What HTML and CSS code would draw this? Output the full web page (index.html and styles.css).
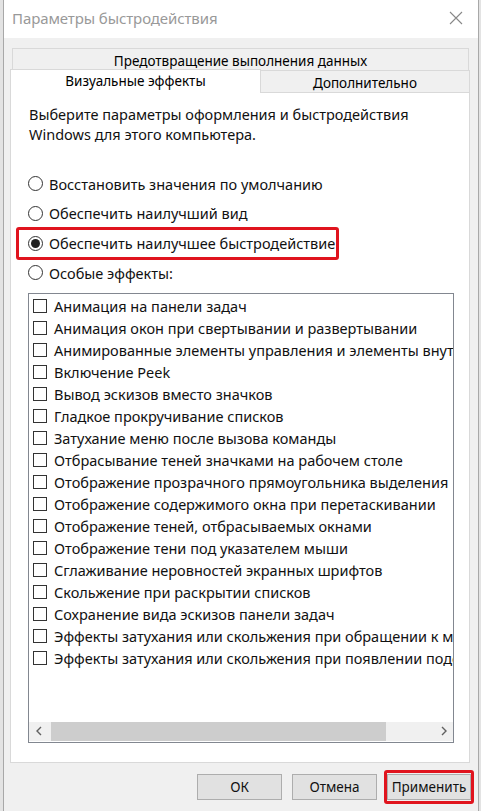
FILE: index.html
```html
<!DOCTYPE html>
<html lang="ru">
<head>
<meta charset="utf-8">
<title>Параметры быстродействия</title>
<link rel="stylesheet" href="styles.css">
</head>
<body>
<div class="screen">
  <div class="window">
    <div class="titlebar">
      <span class="title">Параметры быстродействия</span>
      <svg class="close" width="14" height="14" viewBox="0 0 14 14"><path d="M1 1L13 13M13 1L1 13" stroke="#888" stroke-width="1.1" fill="none"/></svg>
    </div>
    <div class="body">
      <div class="tabrow back">
        <div class="tab full">Предотвращение выполнения данных</div>
      </div>
      <div class="tabrow front">
        <div class="tab selected">Визуальные эффекты</div>
        <div class="tab other">Дополнительно</div>
      </div>
      <div class="panel">
        <p class="intro">Выберите параметры оформления и быстродействия Windows для этого компьютера.</p>
        <div class="radios">
          <div class="radio"><span class="dot"></span>Восстановить значения по умолчанию</div>
          <div class="radio"><span class="dot"></span>Обеспечить наилучший вид</div>
          <div class="radio checked"><span class="dot"></span>Обеспечить наилучшее быстродействие</div>
          <div class="radio"><span class="dot"></span>Особые эффекты:</div>
        </div>
        <div class="listbox">
          <div class="items">
            <div class="item"><span class="box"></span>Анимация на панели задач</div>
            <div class="item"><span class="box"></span>Анимация окон при свертывании и развертывании</div>
            <div class="item"><span class="box"></span>Анимированные элементы управления и элементы внутри окна</div>
            <div class="item"><span class="box"></span>Включение Peek</div>
            <div class="item"><span class="box"></span>Вывод эскизов вместо значков</div>
            <div class="item"><span class="box"></span>Гладкое прокручивание списков</div>
            <div class="item"><span class="box"></span>Затухание меню после вызова команды</div>
            <div class="item"><span class="box"></span>Отбрасывание теней значками на рабочем столе</div>
            <div class="item"><span class="box"></span>Отображение прозрачного прямоугольника выделения</div>
            <div class="item"><span class="box"></span>Отображение содержимого окна при перетаскивании</div>
            <div class="item"><span class="box"></span>Отображение теней, отбрасываемых окнами</div>
            <div class="item"><span class="box"></span>Отображение тени под указателем мыши</div>
            <div class="item"><span class="box"></span>Сглаживание неровностей экранных шрифтов</div>
            <div class="item"><span class="box"></span>Скольжение при раскрытии списков</div>
            <div class="item"><span class="box"></span>Сохранение вида эскизов панели задач</div>
            <div class="item"><span class="box"></span>Эффекты затухания или скольжения при обращении к меню</div>
            <div class="item"><span class="box"></span>Эффекты затухания или скольжения при появлении подсказок</div>
          </div>
          <div class="hscroll">
            <span class="arrow"><svg width="8" height="10" viewBox="0 0 8 10"><path d="M6 1L2 5L6 9" stroke="#606060" stroke-width="1.4" fill="none"/></svg></span>
            <span class="track"><span class="thumb"></span></span>
            <span class="arrow"><svg width="8" height="10" viewBox="0 0 8 10"><path d="M2 1L6 5L2 9" stroke="#606060" stroke-width="1.4" fill="none"/></svg></span>
          </div>
        </div>
      </div>
      <div class="buttons">
        <button class="btn">ОК</button>
        <button class="btn">Отмена</button>
        <span class="highlight"><button class="btn">Применить</button></span>
      </div>
    </div>
  </div>
</div>
</body>
</html>
```
FILE: styles.css
```css
html, body {
  margin: 0;
  padding: 0;
}
body {
  font-family: "Noto Sans", "Open Sans", sans-serif;
  color: #000;
  background: #dcdcdc;
}
.screen {
  width: 481px;
  height: 811px;
  overflow: hidden;
  background: #e3e3e3;
  padding-left: 3px;
  box-sizing: border-box;
}
.window {
  width: 476px;
  height: 830px;
  border: 1px solid #a8a8a8;
  border-top: none;
  box-sizing: border-box;
  background: #f0f0f0;
}
.titlebar {
  height: 38px;
  background: #fff;
  display: flex;
  align-items: center;
  justify-content: space-between;
  padding: 0 15px 0 8px;
}
.title {
  font-size: 15px;
  color: #999;
  letter-spacing: -0.1px;
  margin-top: -3px;
}
.close {
  margin-top: -3px;
}
.body {
  padding-top: 10px;
}
.tabrow {
  display: flex;
  font-size: 13.5px;
}
.tabrow.back {
  padding-left: 8px;
  width: 466px;
  box-sizing: border-box;
}
.tab {
  box-sizing: border-box;
  display: flex;
  align-items: center;
  justify-content: center;
  background: #f0f0f0;
  border: 1px solid #d9d9d9;
  border-bottom: none;
}
.tab.full {
  width: 457px;
  height: 22px;
  padding-top: 2px;
}
.tabrow.front {
  padding-left: 6px;
  height: 22px;
  align-items: flex-end;
}
.tab.selected {
  width: 251px;
  height: 24px;
  margin-top: -2px;
  background: #fff;
  border-color: #d9d9d9;
  position: relative;
  z-index: 1;
  margin-bottom: -1px;
  padding-bottom: 2px;
}
.tab.other {
  width: 209px;
  height: 22px;
  border-left: none;
  padding-top: 3px;
}
.panel {
  margin-left: 6px;
  width: 460px;
  height: 671px;
  box-sizing: border-box;
  background: #fff;
  border: 1px solid #d9d9d9;
  padding: 11px 0 0 18px;
}
.intro {
  margin: 0;
  width: 400px;
  font-size: 14.5px;
  line-height: 20px;
  color: #111;
}
.radios {
  margin-top: 25px;
  display: flex;
  flex-direction: column;
}
.radio {
  height: 29.67px;
  display: flex;
  align-items: center;
  font-size: 14.5px;
  color: #111;
  margin-left: -1px;
}
.dot {
  width: 15px;
  height: 15px;
  border: 1px solid #333;
  border-radius: 50%;
  box-sizing: border-box;
  margin-right: 6px;
  display: flex;
  align-items: center;
  justify-content: center;
  background: #fff;
}
.radio.checked {
  position: relative;
}
.radio.checked .dot::after {
  content: "";
  width: 9px;
  height: 9px;
  border-radius: 50%;
  background: #222;
}
.radio.checked::before {
  content: "";
  position: absolute;
  left: -12px;
  top: -1px;
  width: 323px;
  height: 33px;
  border: 3px solid #e0141e;
  border-radius: 3px;
  box-sizing: border-box;
}
.listbox {
  margin-top: 5px;
  margin-left: -1px;
  width: 426px;
  height: 450px;
  box-sizing: border-box;
  border: 1px solid #828790;
  display: flex;
  flex-direction: column;
  overflow: hidden;
}
.items {
  flex: 1;
  padding-top: 1px;
  overflow: hidden;
}
.item {
  height: 22px;
  display: flex;
  align-items: center;
  white-space: nowrap;
  font-size: 14.5px;
  color: #111;
  padding-left: 4px;
}
.box {
  flex: none;
  width: 14px;
  height: 14px;
  border: 1px solid #333;
  box-sizing: border-box;
  margin-right: 7px;
  background: #fff;
}
.hscroll {
  height: 19px;
  margin-bottom: 1px;
  display: flex;
  background: #f0f0f0;
}
.arrow {
  width: 19px;
  display: flex;
  align-items: center;
  justify-content: center;
  flex: none;
}
.track {
  flex: 1;
  display: flex;
  padding-left: 3px;
}
.thumb {
  width: 335px;
  height: 100%;
  background: #cdcdcd;
}
.buttons {
  display: flex;
  justify-content: flex-end;
  align-items: center;
  gap: 10px;
  padding: 11px 7px 0 0;
  width: 474px;
  box-sizing: border-box;
}
.btn {
  width: 85px;
  height: 26px;
  box-sizing: border-box;
  background: #e1e1e1;
  border: 1px solid #adadad;
  font-family: "Noto Sans", "Open Sans", sans-serif;
  font-size: 13.5px;
  color: #111;
  padding: 0;
}
.highlight {
  display: flex;
  border: 3px solid #e0141e;
  border-radius: 3px;
  padding: 1px 0 1px 0;
  margin: -4px -3px -4px -3px;
}
.highlight .btn {
  width: 84px;
}
```
